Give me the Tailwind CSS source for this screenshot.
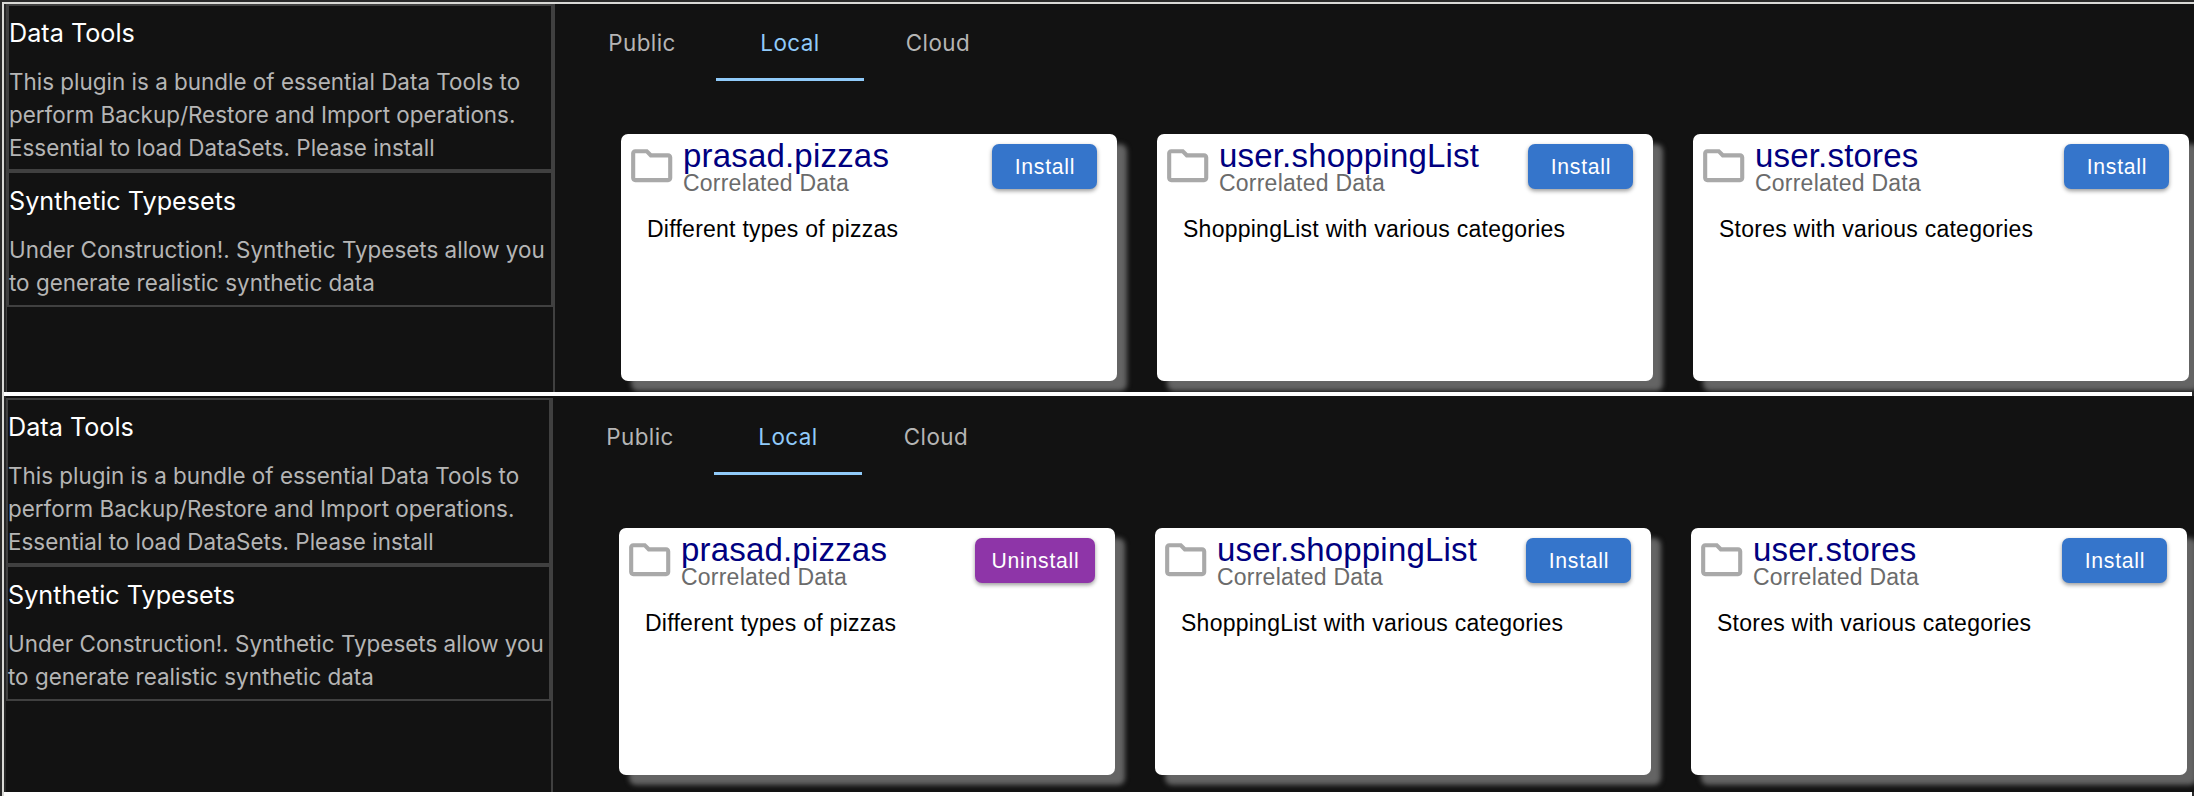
<!DOCTYPE html>
<html lang="en">
<head>
<meta charset="utf-8">
<title>Plugins</title>
<script src="https://cdn.jsdelivr.net/npm/@tailwindcss/browser@4"></script>
</head>
<body class="w-[2194px] h-[796px] overflow-hidden bg-[#2a2a2a] pt-[2px] pl-[2px]">
<svg class="hidden"><symbol id="folder" viewBox="0 0 24 24"><path d="M9.17 6l2 2H20v10H4V6h5.17M10 4H4c-1.1 0-1.99.9-1.99 2L2 18c0 1.1.9 2 2 2h16c1.1 0 2-.9 2-2V8c0-1.1-.9-2-2-2h-8l-2-2z"/></symbol></svg>
<div class="w-[2192px] h-[794px] border-t-2 border-l-2 border-[#d9d9d6] flex flex-col overflow-hidden">
  <section class="h-[388px] shrink-0 bg-[#121212] flex overflow-hidden border-l-2 border-[#262626]">
    <aside class="w-[549px] shrink-0 border-l border-r-2 border-[#404040] font-[Inter,sans-serif]" data-plugins></aside>
    <main class="pl-[13px] flex flex-col" data-datasets="install"></main>
  </section>
  <div class="h-1 w-[2188px] shrink-0 bg-white"></div>
  <section class="h-[396px] shrink-0 bg-[#121212] flex overflow-hidden border-l-2 border-[#262626] pt-[2px]">
    <aside class="w-[547px] shrink-0 border-r-2 border-[#404040] font-[Inter,sans-serif]" data-plugins></aside>
    <main class="pl-[13px] flex flex-col" data-datasets="uninstall"></main>
  </section>
  <div class="h-1 w-[2188px] shrink-0 bg-white"></div>
</div>
<template id="plugins">
  <div class="h-[167px] border-2 border-[#404040] pt-[7px]">
    <h2 class="text-[25.2px] leading-[40px] text-white whitespace-nowrap">Data Tools</h2>
    <p class="mt-[12px] text-[22.45px] leading-[33px] text-[#b5b5b5] whitespace-nowrap">This plugin is a bundle of essential Data Tools to<br>perform Backup/Restore and Import operations.<br>Essential to load DataSets. Please install</p>
  </div>
  <div class="h-[136px] border-2 border-[#404040] pt-[8px]">
    <h2 class="text-[25.2px] leading-[40px] text-white whitespace-nowrap">Synthetic Typesets</h2>
    <p class="mt-[12px] text-[22.45px] leading-[33px] text-[#b5b5b5] whitespace-nowrap">Under Construction!. Synthetic Typesets allow you<br>to generate realistic synthetic data</p>
  </div>
</template>
<template id="tabs">
  <nav class="h-[77px] flex font-[Inter,sans-serif] text-[22.4px] tracking-[0.45px] text-[#b5b5b5] leading-[78px] text-center">
    <span class="w-[148px]">Public</span>
    <span class="w-[148px] text-[#90caf9] border-b-[3px] border-[#90caf9]">Local</span>
    <span class="w-[148px]">Cloud</span>
  </nav>
</template>
<script>
const datasets = [
  ['prasad.pizzas', 'Different types of pizzas'],
  ['user.shoppingList', 'ShoppingList with various categories'],
  ['user.stores', 'Stores with various categories'],
];
const installButton = '<button class="mt-[3px] pt-px pl-px w-[105px] h-[44.5px] rounded-[7px] bg-[#3575cb] text-white text-[21.2px] tracking-[0.75px] shadow-[0_2px_4px_rgba(0,0,0,0.4)]">Install</button>';
const uninstallButton = '<button class="mt-[3px] pt-px pl-px w-[120px] h-[44.5px] rounded-[7px] bg-[#8e35a8] text-white text-[21.2px] tracking-[0.75px] shadow-[0_2px_4px_rgba(0,0,0,0.4)]">Uninstall</button>';
const card = (name, text, button) => `
  <article class="w-[496px] h-[246.5px] shrink-0 rounded-[7px] bg-white shadow-[10px_10px_5px_#646464]">
    <div class="flex items-start h-[56px] pt-[7px] pl-[6.5px] pr-[19.5px]">
      <svg class="size-[49.4px] shrink-0 fill-[#a9a9a9]"><use href="#folder"/></svg>
      <div class="pl-[6.5px] flex-1 whitespace-nowrap">
        <h3 class="text-[33px] leading-[33px] tracking-[0.2px] -mt-[2.5px] text-[#00007f]">${name}</h3>
        <p class="text-[23px] leading-[23px] tracking-[0.25px] mt-[0.5px] text-[#6b6b6b]">Correlated Data</p>
      </div>
      ${button}
    </div>
    <p class="pl-[26.5px] pt-[26px] text-[23px] leading-[26px] tracking-[0.25px] text-black">${text}</p>
  </article>`;
for (const el of document.querySelectorAll('[data-plugins]'))
  el.append(document.getElementById('plugins').content.cloneNode(true));
for (const el of document.querySelectorAll('[data-datasets]')) {
  el.append(document.getElementById('tabs').content.cloneNode(true));
  const cards = datasets.map(([name, text], i) =>
    card(name, text, i === 0 && el.dataset.datasets === 'uninstall' ? uninstallButton : installButton)).join('');
  el.insertAdjacentHTML('beforeend', `<div class="pt-[53px] pl-[52.5px] flex gap-[40px] font-[Liberation_Sans,Arial,sans-serif]">${cards}</div>`);
}
</script>
</body>
</html>
